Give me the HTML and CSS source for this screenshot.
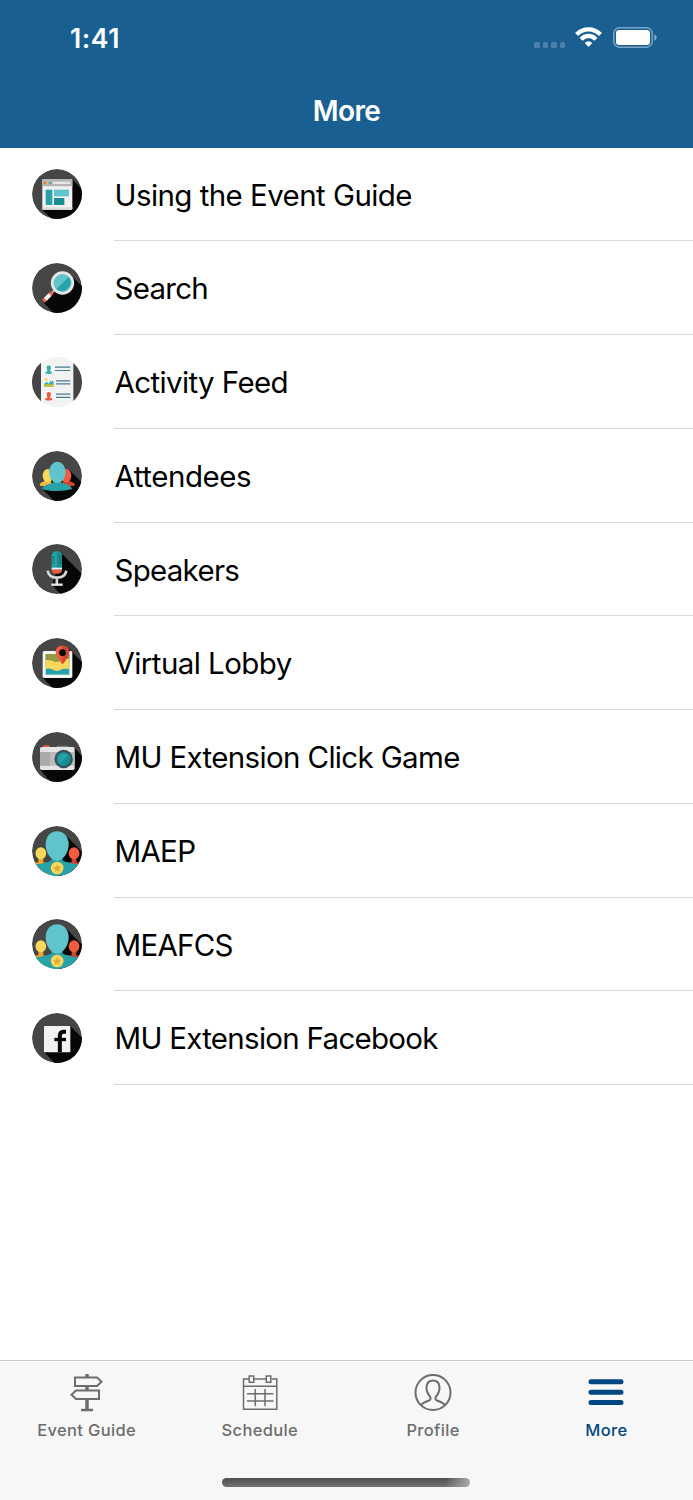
FILE: index.html
```html
<!DOCTYPE html>
<html lang="en">
	<head>
		<meta charset="utf-8">
		<title>More</title>
		<link rel="stylesheet" href="styles.css">
	</head>
	<body>
		<!-- shared icon parts -->
		<svg class="defs" width="0" height="0">
			<defs>
				<clipPath id="disc"><circle cx="105" cy="102" r="75"/></clipPath>
				<g id="team">
					<g clip-path="url(#disc)">
						<circle cx="105" cy="102" r="75" fill="#464646"/>
						<path d="M131 55L190 114V180H105Z" fill="#060707"/>
						<path d="M28 146Q32 136 50 136H62Q75 136 80 146V180H28Z" fill="#eda52c"/>
						<path d="M49 122H64V137Q56 143 49 137Z" fill="#eda52c"/>
						<ellipse cx="56.500" cy="109" rx="16" ry="18" fill="#f9d75b"/>
						<path d="M130 146Q135 136 149 136H160Q178 136 182 146V180H130Z" fill="#cf4630"/>
						<path d="M149 122H163V137Q156 143 149 137Z" fill="#cf4630"/>
						<ellipse cx="156" cy="109" rx="16" ry="18" fill="#f15b3f"/>
						<path d="M28 180V148Q35 142 57 140L85 133Q90 132 89 122H121Q120 132 126 133L154 140Q175 142 182 148V180Z" fill="#27a2a9"/>
						<path d="M105 43C126 43 140 60 140 82C140 107 124 131 105 131S71 107 71 82C71 60 84 43 105 43Z" fill="#5fc4cb"/>
						<circle cx="105.500" cy="153" r="19" fill="#f8d75c"/>
						<path d="M105.500 141L109 149L118 150L111.500 156L113 165L105.500 160.500L98 165L99.500 156L93 150L102 149Z" fill="#e0ac38"/>
					</g>
				</g>
			</defs>
		</svg>

		<div class="screen">
			<header class="header">
				<div class="status">
					<div class="time">1:41</div>
					<div class="status-icons">
						<div class="signal"><i></i><i></i><i></i><i></i></div>
						<svg class="wifi" viewBox="0 0 27 20">
							<g fill="none" stroke="#fff" stroke-width="4.200">
								<path d="M1.600 7.500Q6.500 2.300 13.500 2.300T25.400 7.500"/>
								<path d="M6.100 12.300Q9.200 8.900 13.500 8.900T20.900 12.300"/>
							</g>
							<path d="M9.700 15.900Q13.500 12.400 17.300 15.900L13.500 19.900Z" fill="#fff"/>
						</svg>
						<svg class="battery" viewBox="0 0 44 21">
							<rect x=".8" y=".8" width="38.400" height="19.400" rx="5.500" fill="none" stroke="#7ea5c3" stroke-width="1.500"/>
							<rect x="3" y="3" width="34" height="15" rx="3.200" fill="#fff"/>
							<path d="M41.300 7.200Q43.600 8.300 43.600 10.500T41.300 13.800Z" fill="#8aadc8"/>
						</svg>
					</div>
				</div>
				<h1 class="title">More</h1>
			</header>

			<ul class="list">
				<li class="item">
					<svg class="icon" viewBox="30 27 150 150">
						<g clip-path="url(#disc)">
							<circle cx="105" cy="102" r="75" fill="#464646"/>
							<path d="M151 58L190 97V180H92L61 149Z" fill="#060707"/>
						</g>
						<rect x="61" y="57" width="90" height="92" rx="3" fill="#f2f2f2"/>
						<path d="M61 79V60Q61 57 64 57H148Q151 57 151 60V79Z" fill="#b5b5b5"/>
						<path d="M61 142H151V147Q151 149 148 149H64Q61 149 61 147Z" fill="#dcdcdc"/>
						<rect x="66" y="66" width="5" height="6" fill="#f15b3f"/>
						<rect x="73.500" y="66" width="5" height="6" fill="#efc13c"/>
						<rect x="81" y="66" width="5" height="6" fill="#2ba5aa"/>
						<rect x="93" y="65" width="52" height="7" fill="#e7e7e7"/>
						<rect x="71" y="89" width="20" height="46" fill="#27a2a9"/>
						<rect x="96" y="89" width="45" height="20" fill="#5fc4cb"/>
						<rect x="96" y="114" width="31" height="21" fill="#178e91"/>
					</svg>
					<div class="label l1">Using the Event Guide</div>
				</li>
				<li class="item">
					<svg class="icon" viewBox="30 27 150 150">
						<g clip-path="url(#disc)">
							<circle cx="105" cy="102" r="75" fill="#464646"/>
							<path d="M145 62L190 107V185H102L65 146L94 115Z" fill="#060707"/>
						</g>
						<path d="M97 109L86 120" stroke="#aeb2b4" stroke-width="6"/>
						<path d="M90 116L64 142" stroke="#f15b3f" stroke-width="12"/>
						<path d="M84 122L70 136" stroke="#f2f2f2" stroke-width="12"/>
						<circle cx="121.500" cy="87" r="31" fill="#5fc4cb" stroke="#e4e5e5" stroke-width="8"/>
						<path d="M140 69A26 26 0 0 1 103 105Z" fill="#27a2a9"/>
					</svg>
					<div class="label l2">Search</div>
				</li>
				<li class="item">
					<svg class="icon" viewBox="30 27 150 150">
						<circle cx="105" cy="102" r="75" fill="#f2f2f2"/>
						<path d="M57 44.300A75 75 0 0 0 57 159.700ZM154 45.200A75 75 0 0 1 154 158.800Z" fill="#464646"/>
						<g stroke="#4a7c91" stroke-width="3.500">
							<path d="M99 57.500H145M99 67.500H145M102 98.500H145M102 107.500H145M102 138.500H145M102 148H145"/>
						</g>
						<circle cx="80" cy="64" r="15" fill="#fff"/>
						<path d="M69 76Q69 70 76 70L74 61Q72 52 80 52T87 61L84 70Q91 70 91 76Q80 80 69 76Z" fill="#36b0b5"/>
						<circle cx="80" cy="144" r="15" fill="#fff"/>
						<path d="M69 155Q69 149 76 149L74 140Q72 132 80 132T87 140L84 149Q91 149 91 155Q80 160 69 155Z" fill="#f15b3f"/>
						<path d="M66 116V108L74 101L81 107L85 98L89 102L92 96L95 104V116Z" fill="#36b0b5"/>
						<rect x="66" y="109" width="30" height="8" fill="#c5c143"/>
						<circle cx="72" cy="94" r="4.500" fill="#f9d75b"/>
					</svg>
					<div class="label l3">Activity Feed</div>
				</li>
				<li class="item">
					<svg class="icon" viewBox="30 27 150 150">
						<g clip-path="url(#disc)">
							<circle cx="105" cy="102" r="75" fill="#464646"/>
							<path d="M142 84L190 132V185H105L62 142L100 100Z" fill="#060707"/>
						</g>
						<path d="M53 128Q56 120 68 118V108H88V132H57Q53 131 53 128Z" fill="#f5bb3c"/>
						<ellipse cx="77" cy="101" rx="15" ry="20" fill="#f9d75b"/>
						<path d="M159 128Q156 120 142 118V108H122V132H154Q159 131 159 128Z" fill="#cf4630"/>
						<ellipse cx="133" cy="101" rx="15" ry="20" fill="#f15b3f"/>
						<path d="M60 141Q65 129 88 124Q96 122 95 114H116Q115 122 123 124Q146 129 151 141Q132 147 105 147T60 141Z" fill="#27a2a9"/>
						<ellipse cx="106" cy="91" rx="25" ry="32" fill="#5fc4cb"/>
					</svg>
					<div class="label l4">Attendees</div>
				</li>
				<li class="item">
					<svg class="icon" viewBox="30 27 150 150">
						<g clip-path="url(#disc)">
							<circle cx="105" cy="102" r="75" fill="#464646"/>
							<path d="M115 52L190 127V185H122L90 150L105 105Z" fill="#060707"/>
						</g>
						<path d="M89 64Q89 49 104.500 49T120 64V103H89Z" fill="#27a2a9"/>
						<path d="M104.500 49Q120 49 120 64V103H104.500Z" fill="#178e91"/>
						<path d="M89 66.500H98M89 75H98M89 83.500H98M111 66.500H120M111 75H120M111 83.500H120" stroke="#285f63" stroke-width="3"/>
						<rect x="89" y="98" width="31" height="6" fill="#f2f2f2"/>
						<path d="M89 104H120Q120 116 104.500 116T89 104Z" fill="#f15b3f"/>
						<path d="M77 107Q80 128 104.500 128T133 107M104.500 127V148" fill="none" stroke="#d8d9d9" stroke-width="8"/>
						<path d="M88 149H122" stroke="#e7e8e8" stroke-width="7"/>
					</svg>
					<div class="label l5">Speakers</div>
				</li>
				<li class="item">
					<svg class="icon" viewBox="30 27 150 150">
						<g clip-path="url(#disc)">
							<circle cx="105" cy="102" r="75" fill="#464646"/>
							<path d="M138 57L190 109V185H99L63 146Z" fill="#060707"/>
						</g>
						<rect x="62" y="66" width="89" height="81" rx="5" fill="#f3f4f4"/>
						<rect x="71" y="75" width="71" height="62" fill="#27a2a9"/>
						<path d="M71 75H142V101Q123 96 113 100Q99 105 71 96Z" fill="#929a42"/>
						<path d="M71 94Q84 91 97 98Q109 101 119 94Q129 87 142 90V120Q125 117 116 122Q106 129 94 122Q82 116 71 120Z" fill="#f9d75b"/>
						<path d="M121 106Q101 83 101 69C101 56 110 50 121 50S142 57 142 69Q142 83 121 106Z" fill="#f15b3f"/>
						<path d="M121 50C133 50 142 57 142 69Q142 83 121 106Z" fill="#ce4933"/>
						<circle cx="121.500" cy="71" r="10" fill="#080808"/>
					</svg>
					<div class="label l6">Virtual Lobby</div>
				</li>
				<li class="item">
					<svg class="icon" viewBox="30 27 150 150">
						<g clip-path="url(#disc)">
							<circle cx="105" cy="102" r="75" fill="#464646"/>
							<path d="M157 75L190 108V185H92L54 139Z" fill="#060707"/>
						</g>
						<path d="M63 73L65 67H81L84 73Z" fill="#f15b3f"/>
						<path d="M101 74Q103 68 109 68H137Q140 68 142 74Z" fill="#777c80"/>
						<rect x="54" y="72" width="104" height="69" rx="5" fill="#e4e4e4"/>
						<rect x="54" y="87" width="104" height="41" fill="#bbb"/>
						<rect x="54" y="87" width="30" height="41" fill="#aaa"/>
						<circle cx="125" cy="108" r="24" fill="#27a2a9" stroke="#36505e" stroke-width="7"/>
						<path d="M142 93A23 23 0 0 1 110 125Z" fill="#178e91"/>
						<circle cx="125" cy="108" r="17" fill="none" stroke="#168c91" stroke-width="3"/>
					</svg>
					<div class="label l7">MU Extension Click Game</div>
				</li>
				<li class="item">
					<svg class="icon" viewBox="30 27 150 150"><use href="#team"/></svg>
					<div class="label l8">MAEP</div>
				</li>
				<li class="item">
					<svg class="icon" viewBox="30 27 150 150"><use href="#team"/></svg>
					<div class="label l9">MEAFCS</div>
				</li>
				<li class="item">
					<svg class="icon" viewBox="30 27 150 150">
						<g clip-path="url(#disc)">
							<circle cx="105" cy="102" r="75" fill="#464646"/>
							<path d="M145 66L190 111V185H105L66 144Z" fill="#060707"/>
						</g>
						<rect x="66" y="66" width="79" height="79" rx="2" fill="#f2f2f2"/>
						<path d="M113.500 145V95Q113.500 83 125 83H132" fill="none" stroke="#080808" stroke-width="12"/>
						<path d="M97 106.500H132" stroke="#080808" stroke-width="10"/>
					</svg>
					<div class="label l10">MU Extension Facebook</div>
				</li>
			</ul>

			<nav class="tabs">
				<a class="tab">
					<svg class="tab-icon" viewBox="0 0 40 40" fill="none" stroke="#6d6d6d" stroke-width="2">
						<path d="M8 5.500H30L34.500 9.750L30 14H8ZM32 18.500H9L4.500 22.750L9 27H32Z"/>
						<path d="M20 2V5.500M20 14V18.500M20 27V38" stroke-width="3.500"/>
						<path d="M14 38H26" stroke-width="2.500"/>
					</svg>
					<span class="tab-label">Event Guide</span>
				</a>
				<a class="tab">
					<svg class="tab-icon" viewBox="0 0 40 40" fill="none" stroke="#6d6d6d" stroke-width="1.500">
						<path d="M9 7H3.500V37.300H36.800V7H31.500M13.800 7H26M3.500 14.300H36.800"/>
						<rect x="9.200" y="4" width="4.500" height="6.300"/>
						<rect x="26.300" y="4" width="4.500" height="6.300"/>
						<path d="M7 21.700H33.500M7 29H33.500M15.300 17V34.200M25 17V34.200"/>
					</svg>
					<span class="tab-label">Schedule</span>
				</a>
				<a class="tab">
					<svg class="tab-icon" viewBox="0 0 40 40" fill="none" stroke="#6d6d6d" stroke-width="2">
						<circle cx="20" cy="20.500" r="17.500"/>
						<path d="M8 33.300Q9 31 16 28.500Q18.500 27.500 17 24.500C11.500 18 12.500 8.500 20 8.500S28.500 18 23 24.500Q21.500 27.500 24 28.500Q31 31 32 33.300"/>
					</svg>
					<span class="tab-label">Profile</span>
				</a>
				<a class="tab active">
					<svg class="tab-icon" viewBox="0 0 40 40" stroke="#004680" stroke-width="5" stroke-linecap="round">
						<path d="M5 9.800H35M5 20.200H35M5 30.600H35"/>
					</svg>
					<span class="tab-label">More</span>
				</a>
				<div class="home"></div>
			</nav>
		</div>
	</body>
</html>
```
FILE: styles.css
```css
* {
	box-sizing: border-box;
}

body {
	margin: 0;
	background: #fff;
	font-family: Inter, "Liberation Sans", sans-serif;
}

.defs {
	position: absolute;
}

.screen {
	display: flex;
	flex-direction: column;
	width: 693px;
	height: 1500px;
}

.header {
	height: 147.500px;
	background: #1a5f92;
	color: #fff;
}

.status {
	display: flex;
	justify-content: space-between;
	height: 74px;
	padding: 21px 36px 0 70px;
}

.time {
	font-size: 26.500px;
	font-weight: 600;
	letter-spacing: .6px;
	line-height: 35px;
}

.status-icons {
	display: flex;
	align-items: flex-start;
	padding-top: 6px;
}

.signal {
	display: flex;
	gap: 3.200px;
	margin: 15px 10px 0 0;
}

.signal i {
	width: 5.300px;
	height: 6px;
	border-radius: 1.500px;
	background: #4b81aa;
}

.wifi {
	width: 27px;
	height: 20px;
	margin-right: 11px;
}

.battery {
	width: 44px;
	height: 21px;
}

.title {
	margin: 0;
	font-size: 28px;
	font-weight: 600;
	letter-spacing: -.6px;
	line-height: 74px;
	text-align: center;
}

.list {
	flex: 1;
	margin: 0;
	padding: 0;
	list-style: none;
}

.item {
	display: flex;
	align-items: center;
	height: 93.750px;
	padding-left: 32px;
}

.icon {
	width: 50px;
	height: 50px;
	margin-right: 32px;
}

.label {
	flex: 1;
	height: 93.750px;
	padding-left: .5px;
	border-bottom: 1px solid #d9d9db;
	color: #000;
	font-size: 29.500px;
	line-height: 95px;
	white-space: nowrap;
}

.l1 { letter-spacing: -.56px; }
.l2 { letter-spacing: -.72px; }
.l3 { letter-spacing: -.62px; }
.l4 { letter-spacing: -.46px; }
.l5 { letter-spacing: -.73px; }
.l6 { letter-spacing: -.57px; }
.l7 { letter-spacing: -.65px; }
.l8 { letter-spacing: -.7px; }
.l9 { letter-spacing: -.75px; }
.l10 { letter-spacing: -.72px; }

.tabs {
	position: relative;
	display: flex;
	height: 140px;
	border-top: 1px solid #c9c9c9;
	background: #f7f7f7;
}

.tab {
	display: flex;
	flex: 1;
	flex-direction: column;
	align-items: center;
	padding-top: 11px;
	color: #6d6d6d;
}

.tab-icon {
	width: 40px;
	height: 40px;
}

.tab-label {
	margin-top: 7px;
	font-size: 16.500px;
	font-weight: 500;
	letter-spacing: .35px;
	line-height: 22px;
}

.active {
	color: #004680;
}

.home {
	position: absolute;
	left: 222px;
	bottom: 13px;
	width: 248px;
	height: 9px;
	border-radius: 5px;
	background: linear-gradient(90deg, transparent 90%, #aaa), linear-gradient(#4d4d4d, #747474);
}
```
